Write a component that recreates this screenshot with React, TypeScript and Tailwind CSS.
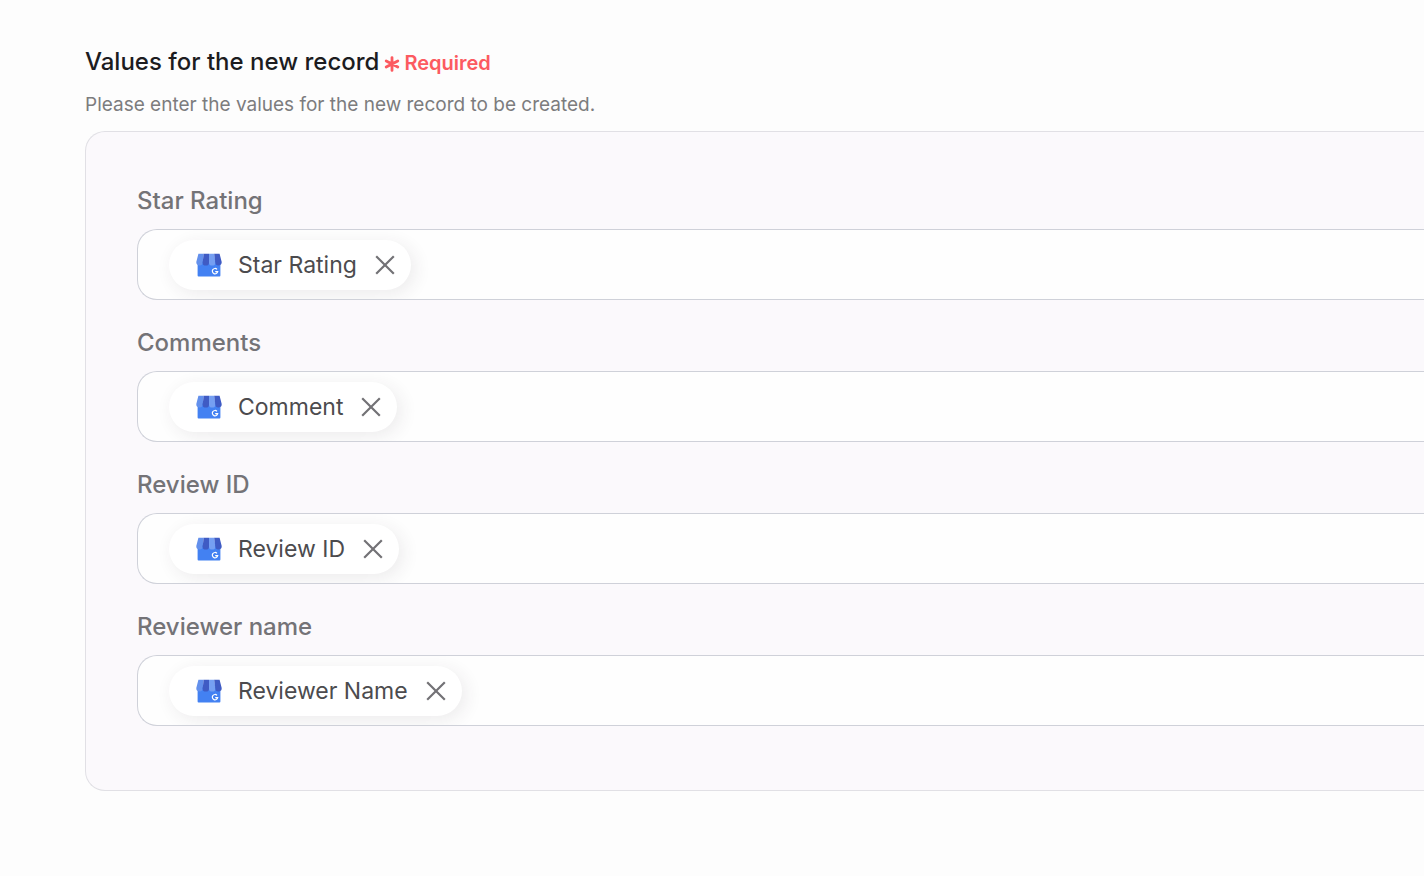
const fields = [
  { id: 'star-rating', label: 'Star Rating', token: 'Star Rating' },
  { id: 'comments', label: 'Comments', token: 'Comment' },
  { id: 'review-id', label: 'Review ID', token: 'Review ID' },
  { id: 'reviewer-name', label: 'Reviewer name', token: 'Reviewer Name' },
];

function StoreIcon() {
  return (
    <svg viewBox="0 0 26 24" className="h-6 w-[26px] shrink-0" aria-hidden="true">
      <path d="M1.6 8h22.8v14.6a.9.9 0 0 1-.9.9H2.5a.9.9 0 0 1-.9-.9z" fill="#4381f2" />
      {/* Awning */}
      <path d="M2.4.8h5.4L6.7 9.4a3.2 3.2 0 0 1-6.4-.4z" fill="#6390ec" />
      <path d="M7.7.8H13v8.6a3.2 3.2 0 0 1-6.4 0z" fill="#3f5bc4" />
      <path d="M13 .8h5.3l1.1 8.6a3.2 3.2 0 0 1-6.4 0z" fill="#759ff2" />
      <path d="M18.2.8h5.4L25.7 9a3.2 3.2 0 0 1-6.4.4z" fill="#3f5bc4" />
      <path
        d="M21 16.3a2.7 2.7 0 1 0 .7 2.4h-2.5"
        fill="none"
        stroke="#fff"
        strokeWidth="1.2"
      />
    </svg>
  );
}

function TokenField({ id, label, token }: { id: string; label: string; token: string }) {
  return (
    <div>
      <label htmlFor={id} className="block text-[24px] leading-8 font-medium text-[#747377]">
        {label}
      </label>
      <div className="mt-3 flex h-[71px] items-center overflow-hidden rounded-l-[20px] border border-r-0 border-[#cfd1d9] bg-[#fefefe] pl-[31px]">
        <div className="flex h-[50px] items-center rounded-full bg-white pr-4 pl-[27px] shadow-[4px_4px_18px_rgba(60,40,60,0.09)]">
          <StoreIcon />
          <span className="ml-4 text-[23px] leading-8 whitespace-nowrap text-[#4c4b4e]">{token}</span>
          <button type="button" aria-label={`Remove ${token}`} className="ml-[18px]">
            <svg viewBox="0 0 20 20" className="size-5" fill="none" stroke="#737276" strokeWidth="2.2">
              <path d="M1.2 1.2l17.6 17.6M18.8 1.2l-17.6 17.6" />
            </svg>
          </button>
        </div>
        <input id={id} type="text" className="h-full min-w-0 flex-1 bg-transparent px-4 text-[23px] outline-none" />
      </div>
    </div>
  );
}

export default function App() {
  return (
    <main className="min-h-screen bg-[#fdfdfd] pt-[46px] pb-20 pl-[85px] font-['Inter',sans-serif]">
      {/* Heading */}
      <div className="flex items-center">
        <h1 className="text-[24px] leading-8 font-medium text-[#1c1c1f]">Values for the new record</h1>
        <div className="ml-[5px] flex items-center gap-1 pt-[2px] text-[#fc5a60]">
          <svg viewBox="0 0 16 16" className="mt-[2px] size-4" fill="none" stroke="currentColor" strokeWidth="2.8" strokeLinecap="round" aria-hidden="true">
            <path d="M8 1.6v12.8M2.2 4.9l11.6 6.2M13.8 4.9L2.2 11.1" />
          </svg>
          <span className="text-[20px] leading-[30px] font-semibold">Required</span>
        </div>
      </div>
      <p className="mt-[15px] text-[19px] leading-6 text-[#7c7c7e]">
        Please enter the values for the new record to be created.
      </p>

      {/* Record values */}
      <form className="mt-[14px] flex flex-col gap-[27px] rounded-l-[20px] border border-r-0 border-[#e1e0e5] bg-[#fbf9fc] pt-[53px] pb-16 pl-[51px]">
        {fields.map((field) => (
          <TokenField key={field.id} {...field} />
        ))}
      </form>
    </main>
  );
}
